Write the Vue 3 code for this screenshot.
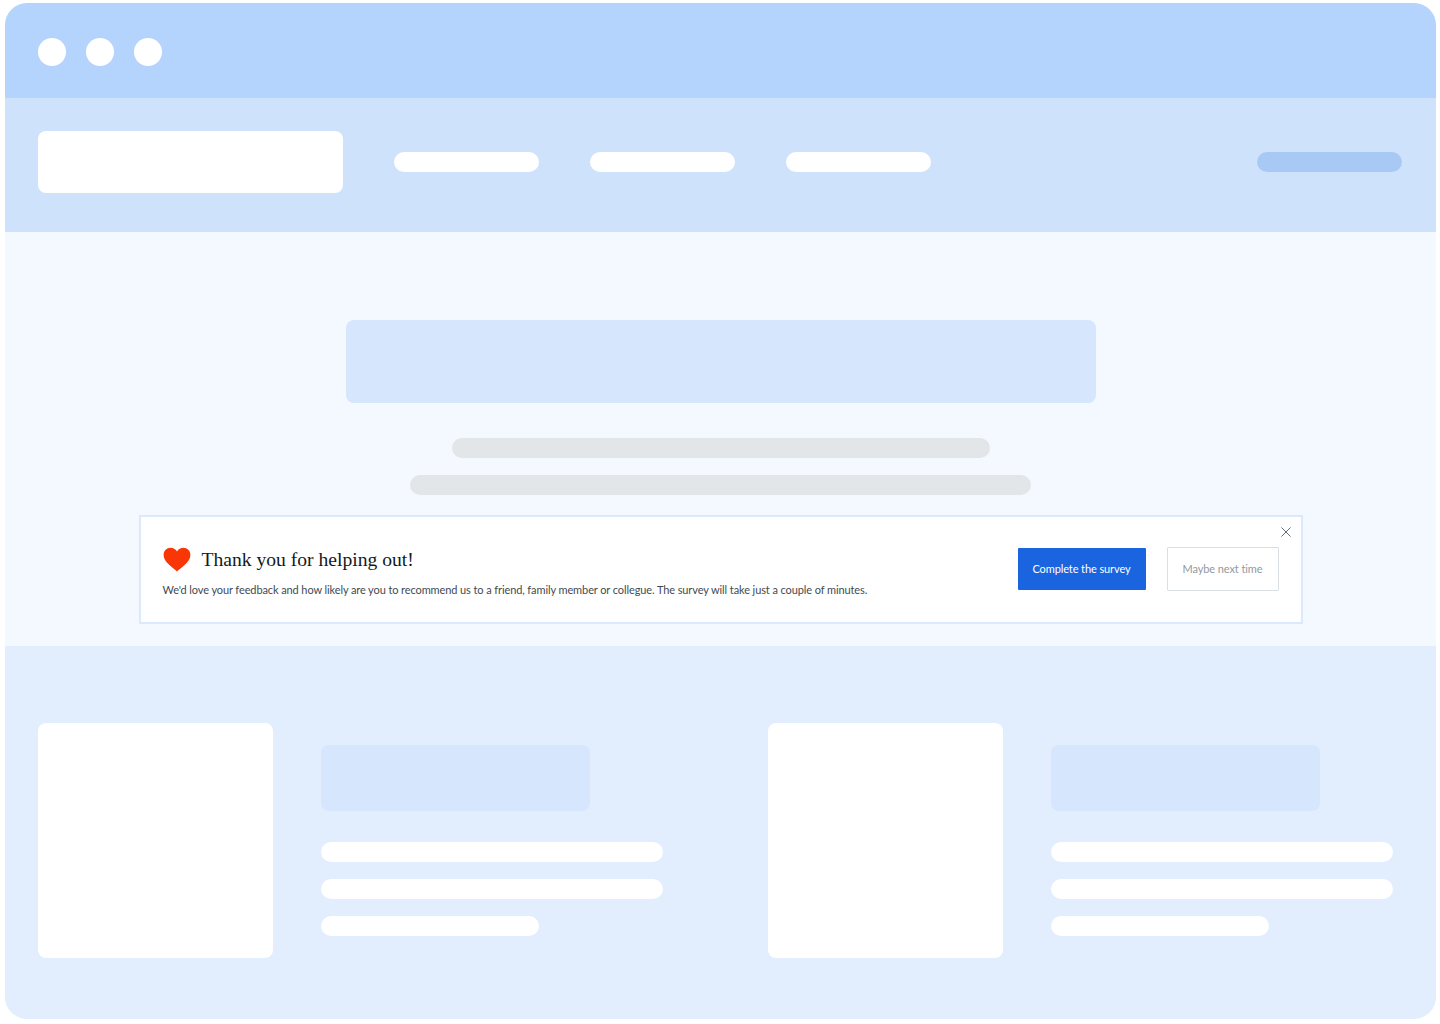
<template>
  <div class="frame">
    <div class="titlebar">
      <span class="dot" v-for="n in 3" :key="n"></span>
    </div>

    <div class="nav">
      <div class="logo"></div>
      <div class="nav-links">
        <span class="pill nav-pill" v-for="n in 3" :key="n"></span>
      </div>
      <span class="pill nav-action"></span>
    </div>

    <div class="hero">
      <div class="hero-block"></div>
      <span class="pill grey grey-short"></span>
      <span class="pill grey grey-long"></span>

      <div class="banner">
        <div class="banner-text">
          <div class="banner-head">
            <svg class="heart" viewBox="0 0 28 25" width="28" height="25">
              <path d="M14 24.6C12.6 23 9.4 20.6 6.4 17.9 3 14.9.6 12 .6 8 .6 3.700 3.800.7 7.500.7c2.700 0 5 1.300 6.500 3.700C15.500 2 17.800.7 20.500.7c3.700 0 6.900 3 6.900 7.300 0 4-2.400 6.900-5.800 9.900-3 2.700-6.200 5.100-7.600 6.700z" fill="#f93706" />
            </svg>
            <h2>Thank you for helping out!</h2>
          </div>
          <p>We'd love your feedback and how likely are you to recommend us to a friend, family member or collegue. The survey will take just a couple of minutes.</p>
        </div>
        <div class="banner-actions">
          <button class="btn primary">Complete the survey</button>
          <button class="btn secondary">Maybe next time</button>
        </div>
        <svg class="close" viewBox="0 0 10 10" width="10" height="10">
          <path d="M.5.5l9 9M9.500.5l-9 9" stroke="#5f6b76" stroke-width="1" fill="none" />
        </svg>
      </div>
    </div>

    <div class="lower">
      <div class="feature" v-for="n in 2" :key="n">
        <div class="thumb"></div>
        <div class="feature-body">
          <div class="feature-title"></div>
          <span class="pill line"></span>
          <span class="pill line"></span>
          <span class="pill line line-short"></span>
        </div>
      </div>
    </div>
  </div>
</template>

<script setup>
</script>

<style>
html,
body {
  background: #fff;
}
</style>

<style scoped>
.frame {
  width: 1431px;
  height: 1016px;
  margin: 3px 0 0 5px;
  border-radius: 22px;
  overflow: hidden;
  display: flex;
  flex-direction: column;
}

.pill {
  display: block;
  height: 20px;
  border-radius: 10px;
}

.titlebar {
  height: 95px;
  padding-left: 33px;
  padding-top: 3px;
  box-sizing: border-box;
  background: #b4d3fd;
  display: flex;
  align-items: center;
  gap: 20px;
}

.dot {
  width: 28px;
  height: 28px;
  border-radius: 50%;
  background: #fff;
}

.nav {
  height: 134px;
  padding: 0 34px 6px 33px;
  box-sizing: border-box;
  background: #cfe2fc;
  display: flex;
  align-items: center;
}

.logo {
  width: 305px;
  height: 62px;
  border-radius: 8px;
  background: #fff;
}

.nav-links {
  display: flex;
  gap: 51px;
  margin-left: 51px;
}

.nav-pill {
  width: 145px;
  background: #fff;
}

.nav-action {
  width: 145px;
  margin-left: auto;
  background: #a9c9f5;
}

.hero {
  height: 414px;
  padding-top: 88px;
  box-sizing: border-box;
  background: #f4f8ff;
  display: flex;
  flex-direction: column;
  align-items: center;
}

.hero-block {
  width: 750px;
  height: 83px;
  border-radius: 8px;
  background: #d6e6fd;
}

.grey {
  background: #e2e6e9;
}

.grey-short {
  width: 538px;
  margin-top: 35px;
}

.grey-long {
  width: 621px;
  margin-top: 17px;
}

.banner {
  position: relative;
  width: 1164px;
  height: 109px;
  margin-top: 20px;
  padding: 0 22px 0 22px;
  box-sizing: border-box;
  border: 2px solid #dbe8fd;
  background: #fff;
  display: flex;
  align-items: center;
  justify-content: space-between;
}

.banner-text {
  padding-top: 4px;
}

.banner-head {
  display: flex;
  align-items: center;
  gap: 11px;
}

.heart {
  flex: none;
}

h2 {
  margin: 0;
  font: 400 19.6px/28px "Liberation Serif", serif;
  color: #14191d;
}

p {
  margin: 8px 0 0;
  font: 400 11px/16px Lato, sans-serif;
  letter-spacing: -0.1px;
  color: #3f4a52;
}

.banner-actions {
  display: flex;
  align-items: center;
  gap: 21px;
  margin-bottom: 1px;
}

.btn {
  height: 42px;
  border-radius: 1px;
  font: 400 11px/16px Lato, sans-serif;
  letter-spacing: -0.1px;
  padding: 0;
}

.primary {
  width: 128px;
  border: 0;
  background: #1a64e0;
  color: #fff;
}

.secondary {
  width: 112px;
  height: 44px;
  border: 1px solid #dadfe4;
  background: #fff;
  color: #92999f;
}

.close {
  position: absolute;
  top: 10px;
  right: 10px;
}

.lower {
  flex: 1;
  padding: 77px 0 0 33px;
  background: #e2edfe;
  display: grid;
  grid-template-columns: 730px 1fr;
  align-content: start;
}

.feature {
  display: flex;
  gap: 48px;
}

.thumb {
  width: 235px;
  height: 235px;
  border-radius: 8px;
  background: #fff;
}

.feature-body {
  padding-top: 22px;
}

.feature-title {
  width: 269px;
  height: 66px;
  border-radius: 8px;
  background: #d6e6fd;
  margin-bottom: 31px;
}

.line {
  width: 342px;
  background: #fff;
  margin-bottom: 17px;
}

.line-short {
  width: 218px;
}
</style>
